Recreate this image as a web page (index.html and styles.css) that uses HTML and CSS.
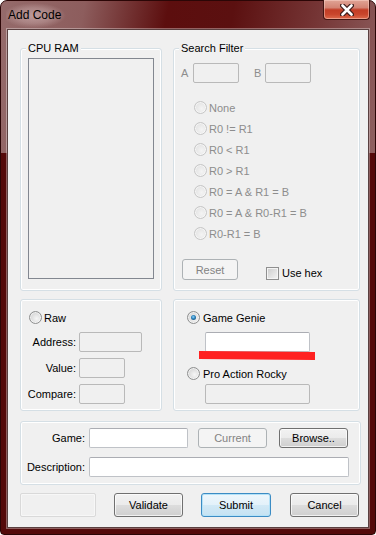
FILE: index.html
```html
<!DOCTYPE html>
<html>
<head>
<meta charset="utf-8">
<meta name="viewport" content="width=device-width, initial-scale=1.0">
<title>Add Code</title>
<link rel="stylesheet" href="styles.css">
</head>
<body>
<div class="window">
	<div class="titlebar">
		<span class="title">Add Code</span>
		<span class="close">
			<svg width="14" height="12" viewBox="0 0 14 12">
				<path d="M2.5 1.5 L11.5 10.5 M11.5 1.5 L2.5 10.5" stroke="#3d1c1a" stroke-width="5" stroke-linecap="round" fill="none"/>
				<path d="M2.5 1.5 L11.5 10.5 M11.5 1.5 L2.5 10.5" stroke="#ffffff" stroke-width="2.6" stroke-linecap="round" fill="none"/>
			</svg>
		</span>
	</div>

	<div class="client">
		<!-- ram + search filter -->
		<div class="row top_row">
			<div class="group">
				<span class="legend">CPU RAM</span>
				<div class="listbox"></div>
			</div>
			<div class="group">
				<span class="legend">Search Filter</span>
				<div class="ab_row">
					<span class="ab_label">A</span><span class="textbox off ab_box"></span>
					<span class="ab_label b">B</span><span class="textbox off ab_box"></span>
				</div>
				<div class="filter_list">
					<div class="option dim"><span class="radio off"></span>None</div>
					<div class="option dim"><span class="radio off"></span>R0 != R1</div>
					<div class="option dim"><span class="radio off"></span>R0 &lt; R1</div>
					<div class="option dim"><span class="radio off"></span>R0 &gt; R1</div>
					<div class="option dim"><span class="radio off"></span>R0 = A &amp; R1 = B</div>
					<div class="option dim"><span class="radio off"></span>R0 = A &amp; R0-R1 = B</div>
					<div class="option dim"><span class="radio off"></span>R0-R1 = B</div>
				</div>
				<div class="filter_bottom">
					<span class="button off reset">Reset</span>
					<span class="check"></span>
					<span class="check_label">Use hex</span>
				</div>
			</div>
		</div>

		<!-- code formats -->
		<div class="row mid_row">
			<div class="group">
				<div class="option raw_option"><span class="radio"></span>Raw</div>
				<div class="field_grid">
					<span class="field_label">Address:</span><span class="textbox off addr_box"></span>
					<span class="field_label">Value:</span><span class="textbox off small_box"></span>
					<span class="field_label">Compare:</span><span class="textbox off small_box"></span>
				</div>
			</div>
			<div class="group">
				<div class="option gg_option"><span class="radio on"></span>Game Genie</div>
				<span class="textbox gg_box"></span>
				<div class="marker"></div>
				<div class="option par_option"><span class="radio"></span>Pro Action Rocky</div>
				<span class="textbox off gg_box par_box"></span>
			</div>
		</div>

		<!-- game / description -->
		<div class="group game_group">
			<div class="game_grid">
				<span class="field_label">Game:</span>
				<div class="game_row">
					<span class="textbox game_box"></span>
					<span class="button off current">Current</span>
					<span class="button browse">Browse..</span>
				</div>
				<span class="field_label">Description:</span>
				<span class="textbox desc_box"></span>
			</div>
		</div>

		<div class="bottom_row">
			<span class="status_box"></span>
			<span class="button validate">Validate</span>
			<span class="button default submit">Submit</span>
			<span class="button cancel">Cancel</span>
		</div>
	</div>
</div>
</body>
</html>
```

FILE: styles.css
```css
	body
	{
		margin: 0;
		background: #ffffff;
		font-family: "Liberation Sans", Arial, sans-serif;
		font-size: 11px;
		color: #000000;
	}
	/* window frame */
	.window
	{
		width: 376px;
		height: 535px;
		box-sizing: border-box;
		padding: 0 6px 6px 6px;
		border: 1px solid #2b0606;
		border-radius: 7px 7px 4px 4px;
		display: flex;
		flex-direction: column;
		background:
			linear-gradient(to bottom, rgba(84,10,10,0) 152px, #540a0a 152px),
			linear-gradient(100deg, #956b6b 0%, #8d5d5d 18%, #5c0e0e 36%, #5b1010 50%, #753535 68%, #8e5f5f 85%, #9d7575 100%);
	}
	.titlebar
	{
		height: 28px;
		display: flex;
		align-items: flex-start;
		flex-shrink: 0;
	}
	.title
	{
		font-size: 12px;
		line-height: 28px;
		padding: 0 8px 0 2px;
		margin-left: -1px;
		color: #000000;
		background: radial-gradient(ellipse 50% 45% at 45% 52%, rgba(225,200,200,0.55) 0%, rgba(225,200,200,0.3) 60%, rgba(225,200,200,0) 100%);
	}
	.close
	{
		margin: -1px -1px 0 auto;
		width: 47px;
		height: 20px;
		box-sizing: border-box;
		border: 1px solid #421613;
		border-top: none;
		border-radius: 0 0 4px 4px;
		display: flex;
		align-items: center;
		justify-content: center;
		background: linear-gradient(to bottom, #e0a496 0%, #d38474 40%, #c33d26 52%, #c9452c 75%, #dd6a4c 100%);
		box-shadow: inset 0 0 0 1px rgba(255,220,210,0.45);
	}
	.client
	{
		flex: 1;
		background: #f0f0f0;
		border: 1px solid #5a4040;
		box-shadow: 0 0 0 1px rgba(255,255,255,0.35);
		padding: 18px 7px 0 12px;
		display: flex;
		flex-direction: column;
	}
	/* layout rows */
	.row
	{
		display: grid;
		grid-template-columns: 142px 187px;
		column-gap: 11px;
	}
	.top_row
	{
		height: 243px;
	}
	.mid_row
	{
		height: 112px;
		margin-top: 8px;
	}
	.game_group
	{
		height: 64px;
		margin-top: 10px;
	}
	.bottom_row
	{
		display: flex;
		height: 24px;
		margin-top: 8px;
	}
	/* group boxes */
	.group
	{
		border: 1px solid #d5dfe5;
		border-radius: 3px;
		box-shadow: inset 0 0 0 1px #ffffff;
		box-sizing: border-box;
	}
	.legend
	{
		display: block;
		width: fit-content;
		margin: -7px 0 0 5px;
		padding: 0 2px;
		line-height: 13px;
		background: #f0f0f0;
	}
	.listbox
	{
		margin: 3px 0 0 7px;
		width: 126px;
		height: 221px;
		box-sizing: border-box;
		border: 1px solid #828790;
		background: #f0f0f0;
	}
	/* controls */
	.textbox
	{
		display: block;
		height: 20px;
		box-sizing: border-box;
		border: 1px solid #bfc2c7;
		border-top-color: #abadb3;
		border-radius: 2px;
		background: #ffffff;
	}
	.textbox.off
	{
		background: #f0f0f0;
		border-color: #b9b9b9;
	}
	.button
	{
		display: flex;
		align-items: center;
		justify-content: center;
		height: 24px;
		box-sizing: border-box;
		border: 1px solid #707070;
		border-radius: 3px;
		background: linear-gradient(to bottom, #f2f2f2 0%, #ebebeb 50%, #dddddd 50%, #cfcfcf 100%);
		box-shadow: inset 0 0 0 1px rgba(255,255,255,0.7);
	}
	.button.off
	{
		border-color: #adb2b5;
		background: #f4f4f4;
		color: #838383;
		box-shadow: none;
	}
	.button.default
	{
		border-color: #3c8cc4;
		background: linear-gradient(to bottom, #eef7fc 0%, #e3f1fa 50%, #d2e9f6 50%, #c5e2f2 100%);
		box-shadow: inset 0 0 0 1px #b4e2f8;
	}
	.radio
	{
		width: 13px;
		height: 13px;
		box-sizing: border-box;
		border-radius: 50%;
		border: 1px solid #8e8f8f;
		background: radial-gradient(circle at 60% 60%, #f6f6f6 0%, #e2e2e2 45%, #c9c9c9 100%);
		box-shadow: inset 0 0 0 1px rgba(255,255,255,0.6);
		flex-shrink: 0;
		position: relative;
	}
	.radio.off
	{
		border-color: #c6c6c6;
		background: radial-gradient(circle at 60% 60%, #f4f4f4 0%, #e6e6e6 60%, #dadada 100%);
	}
	.radio.on::after
	{
		content: "";
		position: absolute;
		left: 3px;
		top: 3px;
		width: 5px;
		height: 5px;
		border-radius: 50%;
		background: radial-gradient(circle at 45% 40%, #8fd6ff 0%, #2a7fb8 45%, #12395a 100%);
	}
	.check
	{
		width: 13px;
		height: 13px;
		box-sizing: border-box;
		border: 1px solid #8f8f8f;
		background: linear-gradient(135deg, #cbcbcb 0%, #e4e4e4 60%, #f4f4f4 100%);
		box-shadow: inset 0 0 0 1px #f4f4f4;
	}
	.option
	{
		display: flex;
		align-items: center;
		gap: 2px;
	}
	.dim
	{
		color: #8d8d8d;
	}
	/* search filter */
	.ab_row
	{
		display: flex;
		align-items: center;
		margin: 8px 0 0 7px;
	}
	.ab_label
	{
		width: 12px;
		color: #8d8d8d;
	}
	.ab_label.b
	{
		margin-left: 15px;
		width: 11px;
	}
	.ab_box
	{
		width: 46px;
	}
	.filter_list
	{
		margin: 14px 0 0 20px;
		display: flex;
		flex-direction: column;
	}
	.filter_list .option
	{
		height: 21px;
	}
	.filter_bottom
	{
		display: flex;
		align-items: flex-end;
		margin: 15px 0 0 8px;
	}
	.reset
	{
		width: 56px;
		height: 21px;
	}
	.filter_bottom .check
	{
		margin-left: 28px;
	}
	.check_label
	{
		margin-left: 3px;
		line-height: 13px;
	}
	/* raw / game genie */
	.raw_option
	{
		margin: 11px 0 0 8px;
	}
	.field_grid
	{
		display: grid;
		grid-template-columns: 55px auto;
		column-gap: 3px;
		row-gap: 6px;
		margin-top: 8px;
		align-items: center;
	}
	.field_label
	{
		text-align: right;
	}
	.addr_box
	{
		width: 63px;
	}
	.small_box
	{
		width: 46px;
	}
	.gg_option
	{
		margin: 11px 0 0 13px;
		gap: 3px;
	}
	.gg_box
	{
		margin: 8px 0 0 31px;
		width: 105px;
	}
	.marker
	{
		margin: -1px 0 0 25px;
		width: 116px;
		height: 9px;
		background: #ff2121;
		clip-path: polygon(0 0, 100% 10%, 100% 100%, 0 90%);
	}
	.par_option
	{
		margin: 7px 0 0 13px;
		gap: 3px;
	}
	.par_box
	{
		margin-top: 4px;
	}
	/* game / description */
	.game_grid
	{
		display: grid;
		grid-template-columns: 64px auto;
		column-gap: 4px;
		row-gap: 9px;
		padding-top: 6px;
		align-items: center;
	}
	.game_row
	{
		display: flex;
	}
	.game_box
	{
		width: 99px;
	}
	.game_row .button
	{
		width: 69px;
		height: 20px;
	}
	.current
	{
		margin-left: 10px;
	}
	.browse
	{
		margin-left: 12px;
	}
	.desc_box
	{
		width: 260px;
	}
	/* bottom buttons */
	.status_box
	{
		width: 76px;
		box-sizing: border-box;
		border: 1px solid #d9d9d9;
		border-radius: 2px;
		box-shadow: inset 0 0 0 1px #f7f7f7;
	}
	.validate
	{
		width: 69px;
		margin-left: 18px;
	}
	.submit
	{
		width: 70px;
		margin-left: 18px;
	}
	.cancel
	{
		width: 69px;
		margin-left: 19px;
	}
```
